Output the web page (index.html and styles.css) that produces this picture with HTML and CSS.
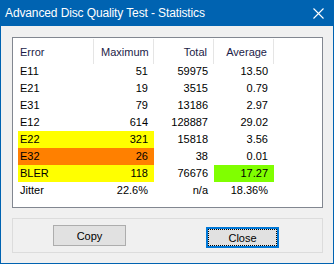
FILE: index.html
```html
<!DOCTYPE html>
<html lang="en">
<head>
    <meta charset="UTF-8">
    <title>Advanced Disc Quality Test - Statistics</title>
    <link rel="stylesheet" href="styles.css">
</head>
<body>
    <div class="window">
        <div class="titlebar">
            <span class="title">Advanced Disc Quality Test - Statistics</span>
            <svg class="close-x" width="11" height="11" viewBox="0 0 11 11">
                <path d="M0.5 0.5 L10.5 10.5 M10.5 0.5 L0.5 10.5" stroke="#fff" stroke-width="1.1" fill="none"/>
            </svg>
        </div>

        <div class="content">
            <!-- list of error counters -->
            <div class="list">
                <div class="list-head">
                    <div class="hcell">Error</div>
                    <div class="hcell num">Maximum</div>
                    <div class="hcell num">Total</div>
                    <div class="hcell num">Average</div>
                </div>
                <div class="row">
                    <div class="cell">E11</div><div class="cell num">51</div><div class="cell num">59975</div><div class="cell num">13.50</div>
                </div>
                <div class="row">
                    <div class="cell">E21</div><div class="cell num">19</div><div class="cell num">3515</div><div class="cell num">0.79</div>
                </div>
                <div class="row">
                    <div class="cell">E31</div><div class="cell num">79</div><div class="cell num">13186</div><div class="cell num">2.97</div>
                </div>
                <div class="row">
                    <div class="cell">E12</div><div class="cell num">614</div><div class="cell num">128887</div><div class="cell num">29.02</div>
                </div>
                <div class="row">
                    <div class="cell yellow">E22</div><div class="cell num yellow">321</div><div class="cell num">15818</div><div class="cell num">3.56</div>
                </div>
                <div class="row">
                    <div class="cell orange">E32</div><div class="cell num orange">26</div><div class="cell num">38</div><div class="cell num">0.01</div>
                </div>
                <div class="row">
                    <div class="cell yellow">BLER</div><div class="cell num yellow">118</div><div class="cell num">76676</div><div class="cell num green">17.27</div>
                </div>
                <div class="row">
                    <div class="cell">Jitter</div><div class="cell num">22.6%</div><div class="cell num">n/a</div><div class="cell num">18.36%</div>
                </div>
            </div>

            <div class="buttons">
                <button type="button" class="btn">Copy</button>
                <button type="button" class="btn default">Close</button>
            </div>
        </div>
    </div>
</body>
</html>
```

FILE: styles.css
```css
body {
    margin: 0;
    font-family: "Liberation Sans", Arial, sans-serif;
    font-size: 11px;
    color: #000;
}

.window {
    width: 334px;
    height: 264px;
    display: flex;
    flex-direction: column;
    background-color: #f0f0f0;
}

.titlebar {
    height: 26px;
    flex: none;
    display: flex;
    align-items: center;
    justify-content: space-between;
    padding: 0 10px 0 5px;
    background-color: #0063b1;
    color: #fff;
}

.title {
    font-size: 12px;
    letter-spacing: -0.12px;
}

.close-x {
    display: block;
    margin-top: 1px;
}

.content {
    flex: 1;
    padding: 11px 10px 0 11px;
    border: 1px solid #0063b1;
    border-top: none;
}

.list {
    width: 311px;
    height: 171px;
    box-sizing: border-box;
    border: 1px solid #828790;
    background-color: #fff;
}

.list-head {
    display: grid;
    grid-template-columns: 81px 60px 60px 60px;
    height: 25px;
}

.hcell {
    box-sizing: border-box;
    padding: 2px 6px 0 7px;
    line-height: 23px;
    color: #1c1c48;
    border-right: 1px solid #e5e5e5;
    margin: 1px 0 1px;
}

.row {
    display: grid;
    grid-template-columns: 76px 60px 60px 60px;
    margin-left: 5px;
    height: 17px;
    line-height: 17px;
}

.cell {
    padding: 0 6px 0 2px;
    white-space: nowrap;
}

.num {
    text-align: right;
}

.yellow {
    background-color: #ffff00;
}

.orange {
    background-color: #ff8000;
}

.green {
    background-color: #80ff00;
}

.buttons {
    width: 311px;
    height: 35px;
    box-sizing: border-box;
    margin-top: 10px;
    border: 1px solid #dcdcdc;
    display: flex;
    align-items: flex-start;
    padding: 6px 0 0 40px;
    gap: 80px;
}

.btn {
    width: 73px;
    height: 21px;
    box-sizing: border-box;
    padding: 0;
    border: 1px solid #adadad;
    background-color: #e1e1e1;
    font-family: "Liberation Sans", Arial, sans-serif;
    font-size: 11px;
    color: #000;
}

.btn.default {
    margin-top: 2px;
    border: 2px solid #0078d7;
    outline: 1px dotted #000;
    outline-offset: -3px;
}
```
